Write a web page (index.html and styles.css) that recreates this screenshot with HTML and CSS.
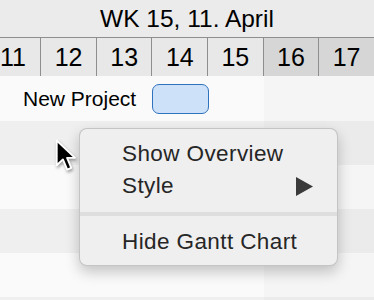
FILE: index.html
```html
<!DOCTYPE html>
<html lang="en">
<head>
  <meta charset="UTF-8">
  <meta name="viewport" content="width=device-width, initial-scale=1.0">
  <title>Gantt Chart</title>
  <link rel="stylesheet" href="styles.css">
</head>
<body>
<div class="gantt">
  <div class="week-title">WK 15, 11. April</div>
  <div class="days">
    <div class="day">11</div>
    <div class="day">12</div>
    <div class="day">13</div>
    <div class="day">14</div>
    <div class="day">15</div>
    <div class="day weekend">16</div>
    <div class="day weekend">17</div>
  </div>
  <div class="rows">
    <div class="row first">
      <span class="task-label">New Project</span>
      <span class="task-bar"></span>
    </div>
    <div class="row odd"></div>
    <div class="row"></div>
    <div class="row odd"></div>
    <div class="row"></div>
    <div class="row odd"></div>
  </div>

  <div class="context-menu">
    <div class="menu-item">Show Overview</div>
    <div class="menu-item">
      <span>Style</span>
      <svg class="submenu-arrow" width="17" height="19" viewBox="0 0 17 19"><polygon points="0,0 17,9.5 0,19" fill="#3a3a3a"/></svg>
    </div>
    <div class="menu-separator"></div>
    <div class="menu-item">Hide Gantt Chart</div>
  </div>

  <svg class="cursor" width="22" height="34" viewBox="0 0 14 22">
    <path d="M1,1 L1,17 L5,13.2 L7.8,19.8 L10.4,18.7 L7.7,12.2 L12.8,12.2 Z" fill="#000" stroke="#fff" stroke-width="1.2" stroke-linejoin="round"/>
  </svg>
</div>
</body>
</html>
```

FILE: styles.css
```css
* {
  margin: 0;
  padding: 0;
  box-sizing: border-box;
}

body {
  font-family: 'Liberation Sans', Arial, sans-serif;
  background: #fafafa;
  color: #000;
  overflow: hidden;
}

.gantt {
  position: relative;
  width: 374px;
  height: 300px;
  overflow: hidden;
}

.week-title {
  height: 38px;
  line-height: 38px;
  text-align: center;
  font-size: 24.5px;
  background: #ebebeb;
  border-bottom: 1px solid #8e8e8e;
}

.days {
  display: grid;
  grid-template-columns: repeat(7, 55.6px);
  margin-left: -14.3px;
  height: 38px;
  border-bottom: 1px solid #8e8e8e;
}

.day {
  background: #e8e8e8;
  border-right: 1px solid #8e8e8e;
  font-size: 25px;
  line-height: 38px;
  text-align: center;
}

.day.weekend {
  background: #d6d6d6;
}

.row {
  height: 44px;
  background: linear-gradient(to right, #fafafa 264px, #f5f5f5 264px);
}

.row.odd {
  background: linear-gradient(to right, #efefef 264px, #ebebeb 264px);
}

.row.first {
  height: 45px;
  display: flex;
  align-items: center;
  padding-left: 23px;
}

.task-label {
  font-size: 21px;
  width: 129px;
}

.task-bar {
  width: 57px;
  height: 30px;
  background: #cde1f8;
  border: 1.5px solid #2f72bd;
  border-radius: 7px;
}

.context-menu {
  position: absolute;
  left: 79px;
  top: 128px;
  width: 259px;
  padding: 9px 0 7px;
  background: #efefef;
  border: 1px solid rgba(0, 0, 0, 0.18);
  border-radius: 8px;
  box-shadow: 0 6px 14px rgba(0, 0, 0, 0.22);
  color: #262626;
}

.menu-item {
  display: flex;
  align-items: center;
  justify-content: space-between;
  height: 32px;
  padding: 0 24px 0 42px;
  font-size: 22.5px;
  letter-spacing: 0.4px;
}

.menu-separator {
  height: 4px;
  margin: 10px 0;
  background: #dedede;
}

.cursor {
  position: absolute;
  left: 55px;
  top: 139px;
  filter: drop-shadow(1px 2px 1.5px rgba(0, 0, 0, 0.35));
}
```
